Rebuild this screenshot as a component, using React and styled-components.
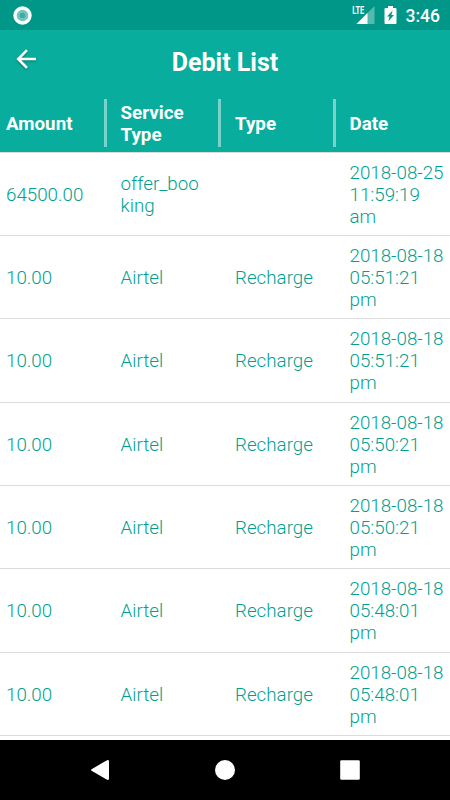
import React from 'react';
import styled, { createGlobalStyle } from 'styled-components';

const GlobalStyle = createGlobalStyle`
  * {
    box-sizing: border-box;
  }

  body {
    margin: 0;
    background: #fff;
    font-family: Roboto, 'Liberation Sans', sans-serif;
  }
`;

const Screen = styled.div`
  width: 450px;
  height: 800px;
  display: flex;
  flex-direction: column;
  overflow: hidden;
  background: #fff;
`;

const StatusBar = styled.div`
  height: 30px;
  flex-shrink: 0;
  display: flex;
  align-items: center;
  padding: 0 10px 0 13px;
  background: #009688;
  color: #fff;
`;

const StatusIcons = styled.div`
  margin-left: auto;
  display: flex;
  align-items: center;
`;

const SignalIcon = styled.svg`
  display: block;
  margin-right: 9px;
`;

const BatteryIcon = styled.svg`
  display: block;
  margin-right: 9px;
`;

const Clock = styled.span`
  padding-top: 1px;
  font-size: 17.5px;
  font-weight: 500;
  line-height: 30px;
`;

const AppBar = styled.header`
  height: 64px;
  flex-shrink: 0;
  display: grid;
  grid-template-columns: 52px 1fr 52px;
  align-items: center;
  background: #09ad9d;
  color: #fff;
`;

const BackButton = styled.button`
  padding: 0;
  margin: 0 0 6px 14px;
  width: 24px;
  height: 24px;
  border: 0;
  background: transparent;
  cursor: pointer;

  svg {
    display: block;
    overflow: visible;
    filter: drop-shadow(0 1px 1px rgba(0, 0, 0, 0.3));
  }
`;

const Title = styled.h1`
  margin: 0;
  padding-top: 2px;
  font-size: 25px;
  font-weight: 700;
  line-height: 30px;
  text-align: center;
`;

const Row = styled.div`
  display: grid;
  grid-template-columns: repeat(4, 114.5px);
  flex-shrink: 0;
  height: 83.35px;
  align-items: center;
  border-bottom: 1.25px solid #dcdcdc;
`;

const HeaderRow = styled(Row)`
  height: 58.6px;
  background: #09ad9d;
  color: #fff;
`;

const Cell = styled.div`
  padding: 2px 0 0 6px;
  font-size: 18.75px;
  font-weight: ${props => props.$head ? 700 : 300};
  line-height: 22px;
  color: ${props => props.$head ? '#fff' : '#009f8f'};
  white-space: pre-line;
`;

const HeadCell = styled.div`
  height: 48px;
  display: flex;
  align-items: center;
  width: 106.5px;
  border-right: 3px solid ${props => props.$last ? 'transparent' : '#7ad3ca'};
`;

const List = styled.main`
  flex: 1;
  min-height: 0;
  overflow: hidden;
`;

const NavBar = styled.nav`
  height: 60px;
  flex-shrink: 0;
  display: flex;
  align-items: center;
  justify-content: center;
  gap: 105px;
  background: #000;

  svg {
    display: block;
  }
`;

const columns = ['Amount', 'Service\nType', 'Type', 'Date'];

const debits = [
  { amount: '64500.00', service: 'offer_boo\nking', type: '', date: '2018-08-25\n11:59:19\nam' },
  { amount: '10.00', service: 'Airtel', type: 'Recharge', date: '2018-08-18\n05:51:21\npm' },
  { amount: '10.00', service: 'Airtel', type: 'Recharge', date: '2018-08-18\n05:51:21\npm' },
  { amount: '10.00', service: 'Airtel', type: 'Recharge', date: '2018-08-18\n05:50:21\npm' },
  { amount: '10.00', service: 'Airtel', type: 'Recharge', date: '2018-08-18\n05:50:21\npm' },
  { amount: '10.00', service: 'Airtel', type: 'Recharge', date: '2018-08-18\n05:48:01\npm' },
  { amount: '10.00', service: 'Airtel', type: 'Recharge', date: '2018-08-18\n05:48:01\npm' },
];

const App = () => {
  return (
    <>
      <GlobalStyle />
      <Screen>
        <StatusBar>
          <svg width="19" height="19" viewBox="0 0 19 19">
            <circle cx="9.5" cy="9.5" r="9.2" fill="#fff" />
            <circle cx="9.5" cy="9.5" r="5.8" fill="#73c5be" />
            <circle cx="9.5" cy="9.5" r="2.8" fill="#3dada2" />
          </svg>
          <StatusIcons>
            <SignalIcon width="23" height="20" viewBox="0 0 23 20">
              <path d="M22.5 1v18H4.5z" fill="#56b9b0" />
              <path d="M0 0h13.5v10H8l-3 1H0z" fill="#009688" />
              <path d="M15.5 8v11H4.5z" fill="#fff" />
              <text
                x="0.2"
                y="8.8"
                textLength="12"
                lengthAdjust="spacingAndGlyphs"
                fontFamily="Roboto"
                fontSize="10.5"
                fontWeight="700"
                fill="#fff"
              >
                LTE
              </text>
            </SignalIcon>
            <BatteryIcon width="13" height="20" viewBox="0 0 13 20">
              <path d="M4 1h5v2h2.5a1 1 0 0 1 1 1v14a1 1 0 0 1-1 1h-10a1 1 0 0 1-1-1V4a1 1 0 0 1 1-1H4z" fill="#fff" />
              <path d="M8.6 5.5 3 11.4h2.5l-1 4.8L10 10H7.4z" fill="#009688" />
            </BatteryIcon>
            <Clock>3:46</Clock>
          </StatusIcons>
        </StatusBar>
        <AppBar>
          <BackButton aria-label="Back">
            <svg width="24" height="24" viewBox="0 0 24 24" fill="none" stroke="#fff" strokeWidth="2.6">
              <path d="M22 12H4M13 3.2 4.2 12l8.8 8.8" />
            </svg>
          </BackButton>
          <Title>Debit List</Title>
        </AppBar>
        <HeaderRow>
          {columns.map((name, i) => (
            <HeadCell key={name} $last={i === columns.length - 1}>
              <Cell $head>{name}</Cell>
            </HeadCell>
          ))}
        </HeaderRow>
        <List>
          {debits.map((debit, i) => (
            <Row key={i}>
              <Cell>{debit.amount}</Cell>
              <Cell>{debit.service}</Cell>
              <Cell>{debit.type}</Cell>
              <Cell>{debit.date}</Cell>
            </Row>
          ))}
        </List>
        <NavBar>
          <svg width="20" height="20" viewBox="0 0 20 20">
            <path d="M2 8.9 16.6.4Q19-.7 19 1.4v17.2q0 2.1-2.4 1L2 11.1Q0 10 2 8.9z" fill="#fff" />
          </svg>
          <svg width="20" height="20" viewBox="0 0 20 20">
            <circle cx="10" cy="10" r="10" fill="#fff" />
          </svg>
          <svg width="20" height="20" viewBox="0 0 20 20">
            <rect x="0.2" y="0.2" width="19.6" height="19.6" rx="1.2" fill="#fff" />
          </svg>
        </NavBar>
      </Screen>
    </>
  );
};

export default App;
